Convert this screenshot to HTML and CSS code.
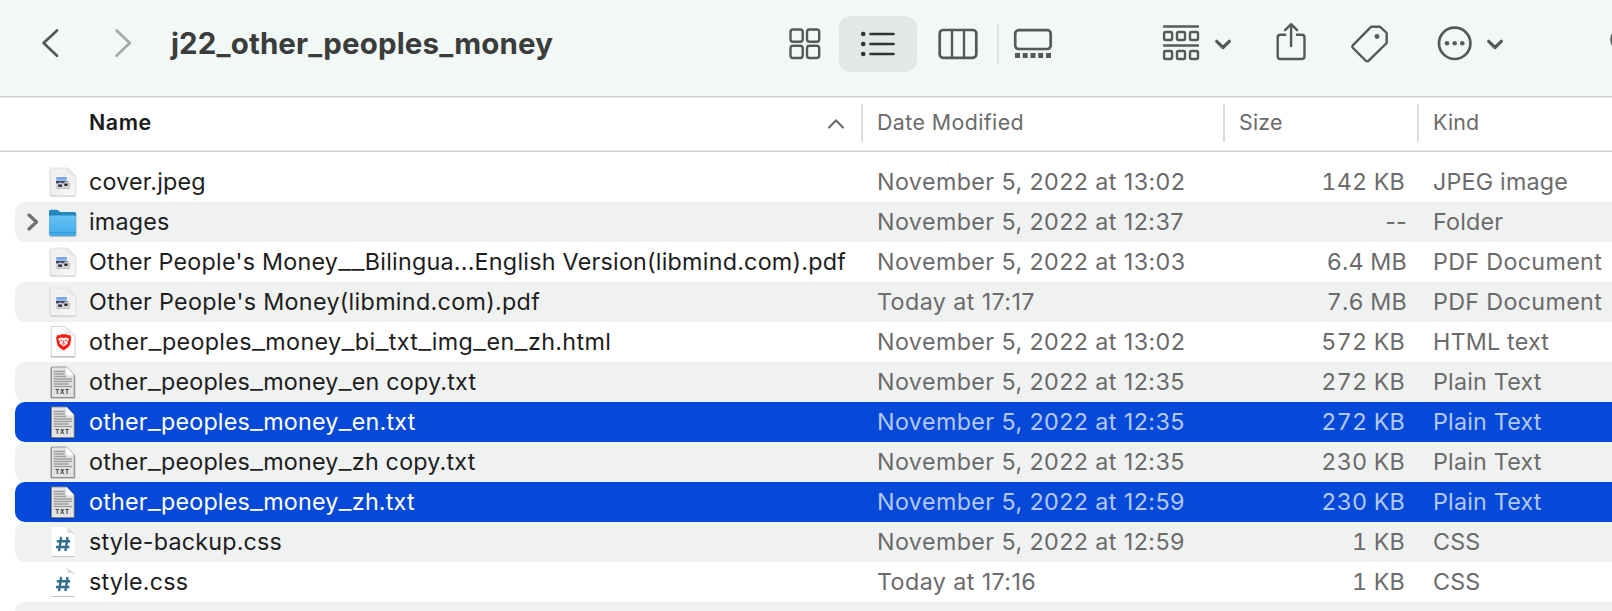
FILE: index.html
```html
<!DOCTYPE html>
<html lang="en">
<head>
<meta charset="utf-8">
<title>j22_other_peoples_money</title>
<link rel="stylesheet" href="styles.css">
</head>
<body>
<svg class="defs" width="0" height="0" aria-hidden="true">
  <defs>
    <linearGradient id="paper" x1="0" y1="0" x2="1" y2="1"><stop offset="0" stop-color="#f1f1f1"/><stop offset=".55" stop-color="#efefef"/><stop offset="1" stop-color="#fafafa"/></linearGradient>
    <linearGradient id="fold" x1="0" y1="1" x2="1" y2="0"><stop offset="0" stop-color="#ffffff"/><stop offset="1" stop-color="#c4c4c4"/></linearGradient>
    <linearGradient id="blue" x1="0" y1="0" x2="0" y2="1"><stop offset="0" stop-color="#66c3f6"/><stop offset="1" stop-color="#3fa9e8"/></linearGradient>
    <linearGradient id="sky" x1="0" y1="0" x2="0" y2="1"><stop offset="0" stop-color="#6f9ae0"/><stop offset="1" stop-color="#b9d2f3"/></linearGradient>
  </defs>
  <symbol id="image" viewBox="0 0 30 40"><g transform="translate(-.5 0) scale(1.11 1)">
    <path d="M4.500 6h14.500l7.500 8v18.500q0 2-2 2h-20q-1.500 0-1.500-1.500v-25.500q0-1.500 1.500-1.500z" fill="#000" opacity=".25"/>
    <path d="M4.500 6h14.500l7.500 8v18q0 1.800-1.800 1.800h-20q-1.400 0-1.400-1.400v-25q0-1.400 1.200-1.400z" fill="url(#paper)" stroke="#d8d8d8" stroke-width=".6"/>
    <path d="M18.500 6v7q0 1.500 1.500 1.500h6.500z" fill="url(#fold)"/>
    <path d="M8.300 14.500h10.500v7h-10.500z" fill="url(#sky)" stroke="#fff" stroke-width=".8"/>
    <path d="M8.500 19h10.500v2.500h-10.500z" fill="#3c455b"/>
    <path d="M9 23.500l3-3 3 1 2-2h2.500l1.500 3.500-.5 3.500h-5l-2-.6-2 .6h-2z" fill="#d3d5d9" stroke="#999" stroke-width=".5"/>
    <path d="M10.500 22.500h3.500v2.300h-3.500zM16 21.500h3v2.500h-3z" fill="#222936"/>
  </g></symbol>
  <symbol id="folder" viewBox="0 0 30 40">
    <path d="M2.500 9q0-1.800 1.800-1.800h6.200q1 0 1.700.7l1.600 1.600h14q1.700 0 1.700 1.700v20.800q0 1.800-1.800 1.800h-23.400q-1.800 0-1.800-1.800z" fill="#111" opacity=".3" transform="translate(0 .9)"/>
    <path d="M2 9.500q0-1.800 1.800-1.800h5.700q1 0 1.700.7l1.600 1.600h14.500q1.700 0 1.700 1.700v3h-27z" fill="#2388c0"/>
    <path d="M2 15q0-1.500 1.500-1.500h24q1.500 0 1.500 1.500v17q0 2-2 2h-23q-2 0-2-2z" fill="url(#blue)"/>
    <path d="M2 30.500h27" stroke="#2f95d3" stroke-width=".8"/>
  </symbol>
  <symbol id="html" viewBox="0 0 30 40"><g transform="translate(-.6 -1) scale(1.08 1)">
    <path d="M4.500 5.500h13l9 9v21h-22z" fill="#fff" stroke="#cfcfcf" stroke-width=".9"/>
    <path d="M4 36h22.500" stroke="#b5b5b5"/>
    <path d="M17.500 5.500v6q0 3 3 3h6z" fill="#ececec"/>
    <path d="M12 14.300l1.700-1h4.600l1.700 1 1.800-.2 1.200 2.600-1 6.800q-.6 2.500-6 6-5.400-3.500-6-6l-1-6.800 1.200-2.600z" fill="#fb1b12"/>
    <path d="M11.500 17.200l3-.6 1.500.6 1.500-.6 3 .6.500 1.300-1.800 2.600.8 1.700-1.600.8-2.400 2-2.400-2-1.600-.8.800-1.700-1.800-2.600z" fill="#fff"/>
    <path d="M12.800 19l2.200.8M19.200 19l-2.200.8M16 19.500v3M14.600 22.500l1.400.8 1.400-.8" fill="none" stroke="#fb1b12" stroke-width=".9"/>
  </g></symbol>
  <symbol id="txt" viewBox="0 0 30 40"><g transform="translate(-.9 0) scale(1.08 1)">
    <path d="M4 5.500h15l8 8v23h-23z" fill="#000" opacity=".32"/>
    <path d="M5 5h14l7 8v22.500h-21z" fill="#e3e3e3" stroke="#858585" stroke-width=".8"/>
    <path d="M7 9.500h10.500M7 12h10.500M7 14.500h11.500M7 17h17M7 19.500h17M7 22h14M7 24.500h17" stroke="#a0a0a0" stroke-width="1.500" />
    <path d="M18.800 5v7q0 1.200 1.200 1.200h6z" fill="#fff"/>
  </g></symbol>
  <symbol id="css" viewBox="0 0 30 40">
    <path d="M4.500 5h12.500q4 1 6 5 2.500 0 4.500 3v21h-23z" fill="#fff"/>
    <path d="M17 5q4.500 1 3.500 6 4.500-1 7 2-.8-5-10.500-8z" fill="#dadada"/>
    <path d="M4.500 34.500h23" stroke="#bcbcbc" stroke-width=".9"/>
    <path d="M14.200 15l-2.200 14M20.600 15l-2.200 14M9.800 19.200h13.400M9 25h13.400" fill="none" stroke="#34708f" stroke-width="2.400"/>
  </symbol>
</svg>

<header class="toolbar">
  <svg class="ico back" width="20" height="32" viewBox="40 27 20 32"><path d="M57 30.500L43.600 43l13.400 12.800"/></svg>
  <svg class="ico forward" width="20" height="32" viewBox="113 27 20 32"><path d="M116.500 30.500L129.800 43l-13.300 12.800"/></svg>
  <h1 class="title">j22_other_peoples_money</h1>
  <div class="views">
    <span class="view"><svg class="ico" width="34" height="34" viewBox="787.500 26.500 34 34"><g stroke-width="2.400"><rect x="790" y="29" width="12.200" height="12.200" rx="2.500"/><rect x="806.500" y="29" width="12.200" height="12.200" rx="2.500"/><rect x="790" y="45.300" width="12.200" height="12.200" rx="2.500"/><rect x="806.500" y="45.300" width="12.200" height="12.200" rx="2.500"/></g></svg></span>
    <span class="view active"><svg class="ico" width="34" height="28" viewBox="861 29 34 28"><path d="M870.500 33h23M870.500 43h23M870.500 53h23"/><g class="solid"><circle cx="863.200" cy="33" r="2.300"/><circle cx="863.200" cy="43" r="2.300"/><circle cx="863.200" cy="53" r="2.300"/></g></svg></span>
    <span class="view columns"><svg class="ico" width="42" height="34" viewBox="937.500 26 42 34"><rect x="940.200" y="29" width="36.600" height="27.800" rx="3.500"/><path d="M952.500 29v28M964.500 29v28" stroke-width="2.400"/></svg></span>
    <span class="rule"></span>
    <span class="view gallery"><svg class="ico" width="42" height="34" viewBox="1012 26 42 34"><rect x="1015.200" y="29.200" width="35.500" height="18.800" rx="3.500"/><path class="solid" d="M1015 52h5v5h-5zM1022.700 52h5v5h-5zM1030.500 52h5v5h-5zM1038.200 52h5v5h-5zM1046 52h5v5h-5z"/></svg></span>
  </div>
  <svg class="ico group" width="70" height="38" viewBox="1162 25 70 38"><g stroke-width="2.400"><path d="M1164 26.500h34M1164 45.500h34"/><rect x="1164.100" y="32" width="8" height="8" rx="1.500"/><rect x="1177" y="32" width="8" height="8" rx="1.500"/><rect x="1190" y="32" width="8" height="8" rx="1.500"/><rect x="1164.100" y="51" width="8" height="8" rx="1.500"/><rect x="1177" y="51" width="8" height="8" rx="1.500"/><rect x="1190" y="51" width="8" height="8" rx="1.500"/></g><path d="M1216.700 41.300l6.300 6.200 6.300-6.200" stroke-width="3.200"/></svg>
  <svg class="ico share" width="32" height="40" viewBox="1275.500 22 32 40"><path d="M1285.800 34.700h-4.800q-2.800 0-2.800 2.800v18.700q0 2.800 2.800 2.800h21.200q2.800 0 2.800-2.800v-18.700q0-2.800-2.800-2.800h-4.800M1291.600 24.500v21.500M1285.600 30.200l6-6 6 6" stroke-width="2.400"/></svg>
  <svg class="ico tag" width="40" height="40" viewBox="1350.500 24 40 40"><path d="M1371.500 26.800h9.200l6.500 6.200v10l-18 17.600q-1.500 1.200-3 0l-12.700-12.600q-1.300-1.400 0-2.800z" stroke-width="2.400"/><circle class="solid" cx="1377.500" cy="36.500" r="2.400"/></svg>
  <svg class="ico more" width="66" height="38" viewBox="1437 24 66 38"><circle cx="1454.700" cy="43.300" r="15.700"/><g class="solid"><circle cx="1447" cy="43.300" r="2.300"/><circle cx="1454.700" cy="43.300" r="2.300"/><circle cx="1462.300" cy="43.300" r="2.300"/></g><path d="M1488.700 41.300l6.300 6.200 6.300-6.200" stroke-width="3.200"/></svg>
  <svg class="ico search" width="3" height="30" viewBox="1609 25 3 30"><circle cx="1622.600" cy="39.500" r="11"/></svg>
</header>

<div class="cols head">
  <div class="c-name"><b>Name</b><svg class="sort" width="18" height="12" viewBox="0 0 18 12"><path d="M2 9.500l7-7 7 7"/></svg></div>
  <div class="c-date">Date Modified</div>
  <div class="c-size">Size</div>
  <div class="c-kind">Kind</div>
</div>

<main class="list">
  <div class="cols row"><div class="c-name"><svg class="file"><use href="#image"/></svg><span>cover.jpeg</span></div><div class="c-date">November 5, 2022 at 13:02</div><div class="c-size">142 KB</div><div class="c-kind">JPEG image</div></div>
  <div class="cols row"><div class="c-name"><svg class="disclose" width="12" height="18" viewBox="0 0 12 18"><path d="M2 2l7.500 7-7.500 7"/></svg><svg class="file"><use href="#folder"/></svg><span>images</span></div><div class="c-date">November 5, 2022 at 12:37</div><div class="c-size dashes">--</div><div class="c-kind">Folder</div></div>
  <div class="cols row"><div class="c-name"><svg class="file"><use href="#image"/></svg><span class="truncated">Other People's Money<i>__</i>Bilingua...English Version(libmind.com).pdf</span></div><div class="c-date">November 5, 2022 at 13:03</div><div class="c-size wide">6.4 MB</div><div class="c-kind pdf">PDF Document</div></div>
  <div class="cols row"><div class="c-name"><svg class="file"><use href="#image"/></svg><span class="title-case">Other People's Money(libmind.com).pdf</span></div><div class="c-date">Today at 17:17</div><div class="c-size wide">7.6 MB</div><div class="c-kind pdf">PDF Document</div></div>
  <div class="cols row"><div class="c-name"><svg class="file"><use href="#html"/></svg><span class="web">other<i>_</i>peoples<i>_</i>money<i>_</i>bi<i>_</i>txt<i>_</i>img<i>_</i>en<i>_</i>zh.html</span></div><div class="c-date">November 5, 2022 at 13:02</div><div class="c-size">572 KB</div><div class="c-kind">HTML text</div></div>
  <div class="cols row"><div class="c-name"><span class="file doc"><svg class="file"><use href="#txt"/></svg><small>TXT</small></span><span>other<i>_</i>peoples<i>_</i>money<i>_</i>en copy.txt</span></div><div class="c-date">November 5, 2022 at 12:35</div><div class="c-size">272 KB</div><div class="c-kind">Plain Text</div></div>
  <div class="cols row selected"><div class="c-name"><span class="file doc"><svg class="file"><use href="#txt"/></svg><small>TXT</small></span><span>other<i>_</i>peoples<i>_</i>money<i>_</i>en.txt</span></div><div class="c-date">November 5, 2022 at 12:35</div><div class="c-size">272 KB</div><div class="c-kind">Plain Text</div></div>
  <div class="cols row"><div class="c-name"><span class="file doc"><svg class="file"><use href="#txt"/></svg><small>TXT</small></span><span>other<i>_</i>peoples<i>_</i>money<i>_</i>zh copy.txt</span></div><div class="c-date">November 5, 2022 at 12:35</div><div class="c-size">230 KB</div><div class="c-kind">Plain Text</div></div>
  <div class="cols row selected"><div class="c-name"><span class="file doc"><svg class="file"><use href="#txt"/></svg><small>TXT</small></span><span>other<i>_</i>peoples<i>_</i>money<i>_</i>zh.txt</span></div><div class="c-date">November 5, 2022 at 12:59</div><div class="c-size">230 KB</div><div class="c-kind">Plain Text</div></div>
  <div class="cols row"><div class="c-name"><svg class="file"><use href="#css"/></svg><span>style-backup.css</span></div><div class="c-date">November 5, 2022 at 12:59</div><div class="c-size">1 KB</div><div class="c-kind">CSS</div></div>
  <div class="cols row"><div class="c-name"><svg class="file"><use href="#css"/></svg><span>style.css</span></div><div class="c-date">Today at 17:16</div><div class="c-size">1 KB</div><div class="c-kind">CSS</div></div>
  <div class="row last"></div>
</main>
</body>
</html>
```
FILE: styles.css
```css
* { box-sizing: border-box; }
body {
  margin: 0;
  height: 611px;
  overflow: hidden;
  background: #fff;
  color: #1d1d1d;
  font-family: Inter, "Liberation Sans", sans-serif;
  font-size: 23.3px;
  letter-spacing: .2px;
  white-space: nowrap;
}
svg { flex: none; display: block; }
.defs { position: absolute; }

.toolbar {
  display: flex;
  align-items: flex-start;
  height: 98px;
  background: #f2f8f6;
  border-bottom: 1px solid #e6e8e7;
  box-shadow: inset 0 -1px #cccfce;
}
.ico {
  fill: none;
  stroke: #555a58;
  stroke-width: 2.7;
  stroke-linecap: round;
  stroke-linejoin: round;
}
.solid { fill: #555a58; stroke: none; }
.back { margin: 27px 0 0 40px; }
.forward { margin: 27px 0 0 53px; stroke: #a5aaa8; }
.title {
  flex: none;
  width: 628px;
  margin: 0 0 0 38px;
  padding-top: 23px;
  font-size: 29.5px;
  line-height: 40px;
  font-weight: 700;
  letter-spacing: .12px;
  color: #3a3d3b;
}
.views { display: flex; flex: none; align-items: center; height: 56px; margin: 16px 0 0 -11.5px; }
.view { display: flex; align-items: center; justify-content: center; height: 56px; }
.view.active { width: 78px; margin-left: 17.5px; border-radius: 12px; background: #e2e8e5; }
.active .ico { stroke: #303332; }
.active .solid { fill: #303332; stroke: none; }
.columns { margin-left: 20px; }
.rule { width: 2px; height: 40px; margin-left: 18px; background: #e0e6e3; }
.gallery { margin-left: 12.5px; }
.group { margin: 25px 0 0 108px; }
.share { margin: 22px 0 0 43.5px; }
.tag { margin: 24px 0 0 43px; }
.more { margin: 24px 0 0 46.5px; }
.search { margin: 25px 0 0 106px; }

.cols { display: grid; grid-template-columns: 863px 362px 194px 1fr; }
.head {
  height: 54px;
  align-items: start;
  padding-top: 6px;
  line-height: 36px;
  font-size: 21.4px;
  color: #6b6b6b;
  border-bottom: 1px solid #d0d0d0;
  box-shadow: inset 0 -1px #ececec;
}
.head > div { height: 38px; }
.head .c-name, .head .c-date, .head .c-size { border-right: 2px solid #dedede; }
.head b { font-weight: 600; letter-spacing: .6px; color: #1b1b1b; }
.c-name { display: flex; align-items: center; }
.head .c-name { align-items: flex-start; justify-content: space-between; padding: 0 16px 0 89px; }
.sort { margin-top: 14px; fill: none; stroke: #666; stroke-width: 2; stroke-linecap: round; }
.c-date, .head .c-size, .c-kind { padding-left: 14px; }
.head .c-date { letter-spacing: .4px; }

.list { height: 459px; padding: 10px 0 0 15px; overflow: hidden; }
.row {
  height: 40px;
  line-height: 40px;
  grid-template-columns: 848px 362px 194px 1fr;
  color: #6b6b6b;
  border-radius: 10px 0 0 10px;
}
.row:nth-child(even) { background: #f0f2f1; }
.row.selected { background: #0649d9; color: #b4c8f4; }
.row.last { height: 9px; border-radius: 10px 0 0 0; }
.row .c-name { padding-left: 32px; color: #1d1d1d; }
.row.selected .c-name { color: #fff; }
/* widened underscores in file names */
.row i { font-style: normal; font-weight: 300; font-size: 1.25em; line-height: 0; vertical-align: 1px; }
.title-case { letter-spacing: .32px; }
.truncated { letter-spacing: .24px; }
.web { letter-spacing: .35px; }
.file { width: 30px; height: 40px; margin-right: 12px; }
.doc { position: relative; flex: none; }
.doc small {
  position: absolute;
  left: 0;
  bottom: 6px;
  width: 31px;
  font-size: 6px;
  font-weight: 700;
  line-height: 8px;
  letter-spacing: .8px;
  text-align: center;
  color: #333;
}
.disclose { margin-left: -20px; margin-right: 8px; fill: none; stroke: #6e706f; stroke-width: 3.2; stroke-linecap: round; stroke-linejoin: round; }
.row .c-date { letter-spacing: .58px; }
.row .c-date { letter-spacing: .4px; }
.row .c-size { text-align: right; padding-right: 14px; font-variant-numeric: tabular-nums; }
.row .c-size.wide { padding-right: 12px; }
.row .c-size.dashes { padding-right: 12px; font-variant-numeric: normal; }
.row .pdf { letter-spacing: .32px; }
```
